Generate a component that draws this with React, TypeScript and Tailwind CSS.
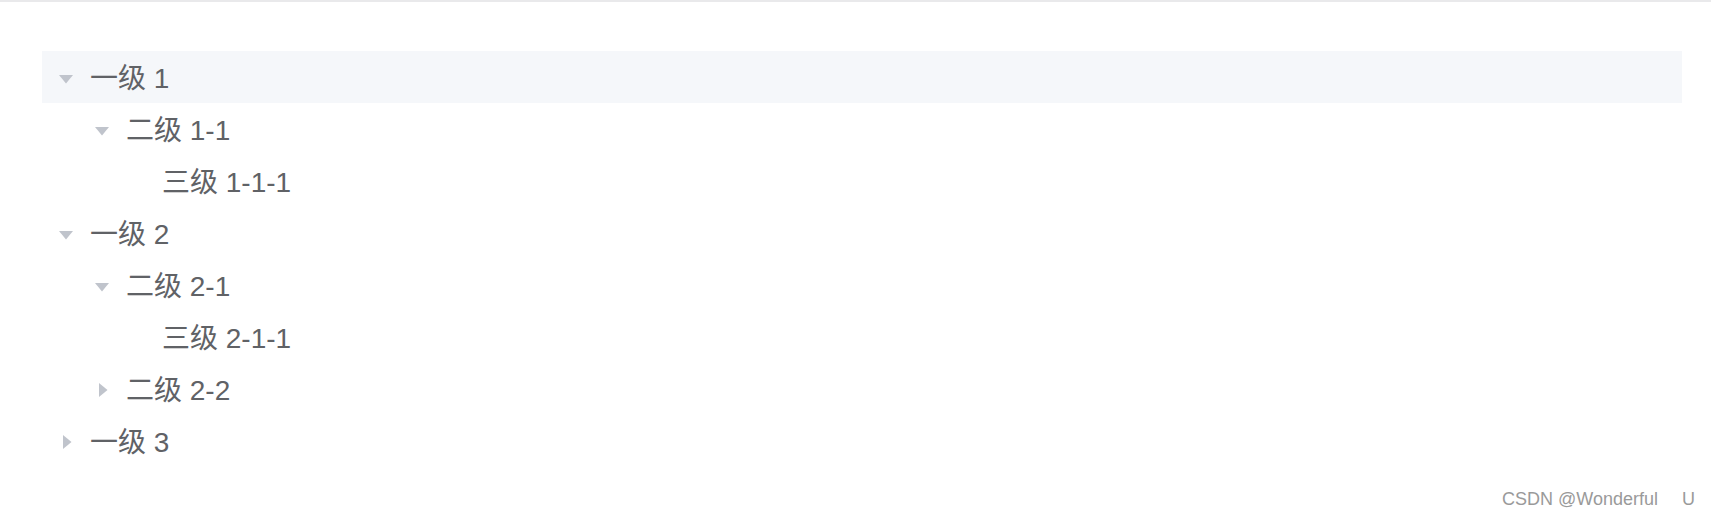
import React from "react";

type Node = { label: string; children?: Node[]; expanded?: boolean; highlight?: boolean };

const data: Node[] = [
  {
    label: "一级 1",
    expanded: true,
    highlight: true,
    children: [{ label: "二级 1-1", expanded: true, children: [{ label: "三级 1-1-1" }] }],
  },
  {
    label: "一级 2",
    expanded: true,
    children: [
      { label: "二级 2-1", expanded: true, children: [{ label: "三级 2-1-1" }] },
      { label: "二级 2-2", children: [{ label: "三级 2-2-1" }] },
    ],
  },
  { label: "一级 3", children: [{ label: "二级 3-1" }] },
];

function Caret({ expanded, leaf }: { expanded?: boolean; leaf?: boolean }) {
  return (
    <span className="w-[48px] h-[52px] flex items-center justify-center shrink-0 pt-[1px]">
      {!leaf && (
        <svg
          width="24"
          height="24"
          viewBox="0 0 24 24"
          className={expanded ? "rotate-90" : ""}
        >
          <polygon points="9,5 17.5,12 9,19" fill="#c0c4cc" />
        </svg>
      )}
    </span>
  );
}

function Rows({ nodes, level }: { nodes: Node[]; level: number }) {
  return (
    <>
      {nodes.map((n) => (
        <React.Fragment key={n.label}>
          <div
            className={
              "flex items-center h-[52px] " + (n.highlight ? "bg-[#f5f7fa]" : "")
            }
          >
            <div style={{ width: level * 36 }} className="shrink-0" />
            <Caret expanded={n.expanded} leaf={!n.children} />
            <span className="text-[28px] leading-none text-[#606266] pt-[4px]">{n.label}</span>
          </div>
          {n.expanded && n.children && <Rows nodes={n.children} level={level + 1} />}
        </React.Fragment>
      ))}
    </>
  );
}

export default function App() {
  return (
    <div
      className="w-[1711px] h-[515px] bg-white border-t-2 border-[#e9e9eb] flex flex-col overflow-hidden"
      style={{ fontFamily: '"Liberation Sans", "Noto Sans CJK SC", sans-serif' }}
    >
      <div className="pt-[49px] pl-[42px] pr-[29px]">
        <Rows nodes={data} level={0} />
      </div>
      <div className="mt-[22px] flex justify-end pr-[16px] text-[18px] leading-[20px] text-[#9a9a9a]">
        <span>CSDN @Wonderful</span>
        <span className="ml-[24px]">U</span>
      </div>
    </div>
  );
}
